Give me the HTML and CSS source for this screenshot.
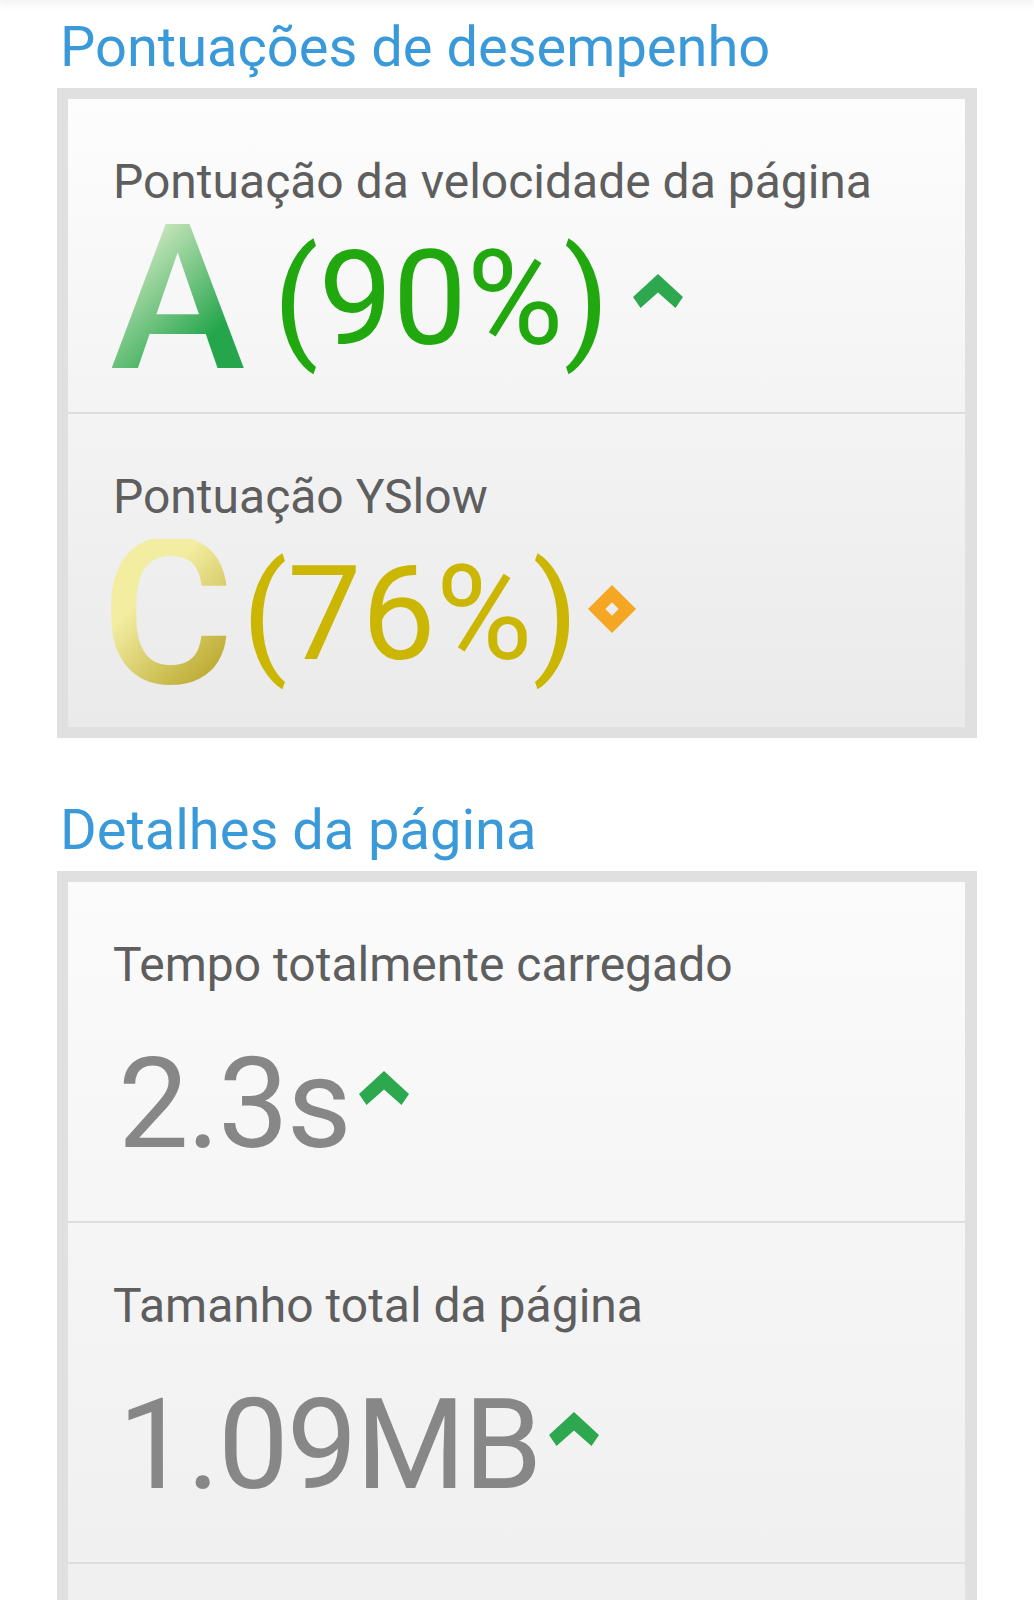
FILE: index.html
```html
<!DOCTYPE html>
<html lang="pt-BR">
<head>
  <meta charset="UTF-8" />
  <meta name="viewport" content="width=device-width, initial-scale=1.0"/>
  <title>Relatório de desempenho</title>
  <link rel="stylesheet" href="styles.css">
</head>
<body>

  <div class="appbar"></div>

  <main class="page">

    <h2 class="section-title">Pontuações de desempenho</h2>
    <div class="card scores">
      <div class="row">
        <div class="label">Pontuação da velocidade da página</div>
        <div class="score">
          <span class="grade grade-a">A</span>
          <span class="pct pct-good">(90%)</span>
          <svg class="trend trend-score" width="50" height="34" viewBox="0 0 50 34">
            <polygon points="25,0 50,23 42.5,34 25,18.5 7.5,34 0,23" fill="#2ea84f"/>
          </svg>
        </div>
      </div>
      <div class="row">
        <div class="label">Pontuação YSlow</div>
        <div class="score">
          <span class="grade grade-c">C</span>
          <span class="pct pct-avg">(76%)</span>
          <svg class="trend trend-flat" width="48" height="48" viewBox="0 0 47 47">
            <path d="M23.5 0 L47 23.5 L23.5 47 L0 23.5 Z M23.5 17 L17 23.5 L23.5 30 L30 23.5 Z" fill="#f5a623" fill-rule="evenodd"/>
          </svg>
        </div>
      </div>
    </div>

    <h2 class="section-title">Detalhes da página</h2>
    <div class="card details">
      <div class="row">
        <div class="label">Tempo totalmente carregado</div>
        <div class="value">
          <span>2.3s</span>
          <svg class="trend" width="50" height="34" viewBox="0 0 50 34">
            <polygon points="25,0 50,23 42.5,34 25,18.5 7.5,34 0,23" fill="#2ea84f"/>
          </svg>
        </div>
      </div>
      <div class="row">
        <div class="label">Tamanho total da página</div>
        <div class="value">
          <span>1.09MB</span>
          <svg class="trend" width="50" height="34" viewBox="0 0 50 34">
            <polygon points="25,0 50,23 42.5,34 25,18.5 7.5,34 0,23" fill="#2ea84f"/>
          </svg>
        </div>
      </div>
      <div class="row row-more"></div>
    </div>

  </main>

</body>
</html>
```

FILE: styles.css
```css
* {
  box-sizing: border-box;
}
body {
  margin: 0;
  background-color: #fff;
  font-family: Roboto, "Open Sans", sans-serif;
}
.appbar {
  height: 0;
  box-shadow: 0 0 10px 3px rgba(0,0,0,0.08);
}
.page {
  padding: 0 57px;
}
.section-title {
  margin: 14px 0 8px;
  padding-left: 3px;
  font-size: 56px;
  line-height: 66px;
  font-weight: 400;
  color: #3a9ad9;
}
.card + .section-title {
  margin-top: 59px;
}
.card {
  border: 11px solid #e0e0e0;
  border-right-width: 12px;
}
.scores {
  background: linear-gradient(#fdfdfd, #eaeaea);
}
.details {
  background: linear-gradient(#fbfbfb, #f0f0f0 680px, #ebebeb);
}
.row {
  padding: 55px 0 38px 45px;
  border-top: 2px solid #dedede;
}
.row:first-child {
  border-top: none;
}
.details .row {
  padding-bottom: 51px;
}
.row-more {
  height: 339px;
}
.label {
  font-size: 48px;
  line-height: 56px;
  color: #5e5e5e;
}
.score {
  display: flex;
  align-items: center;
  height: 150px;
  margin-top: 14px;
  margin-left: -3px;
}
.grade {
  font-size: 204px;
  line-height: 150px;
  font-weight: 500;
  background-clip: text;
  -webkit-background-clip: text;
  color: transparent;
}
.grade-a {
  margin-right: 14px;
  background-image: linear-gradient(135deg, #c3e3b9 20%, #25a64c 75%);
}
.grade-c {
  margin-left: -9px;
  margin-right: -6px;
  background-image: linear-gradient(135deg, #f2eda1 35%, #bfad36 85%);
}
.pct {
  font-size: 132px;
  line-height: 1;
  margin-left: 14px;
}
.pct-good {
  color: #22a80f;
}
.pct-avg {
  color: #cbb703;
}
.trend {
  flex: none;
  margin-left: 24px;
  margin-bottom: 16px;
}
.trend-flat {
  margin-left: 10px;
  margin-bottom: 10px;
}
.value {
  display: flex;
  align-items: center;
  margin-top: 45px;
  padding-left: 5px;
  font-size: 126px;
  line-height: 132px;
  letter-spacing: -2px;
  color: #878787;
}
.value .trend {
  margin-left: 9px;
  margin-bottom: 32px;
}
```
